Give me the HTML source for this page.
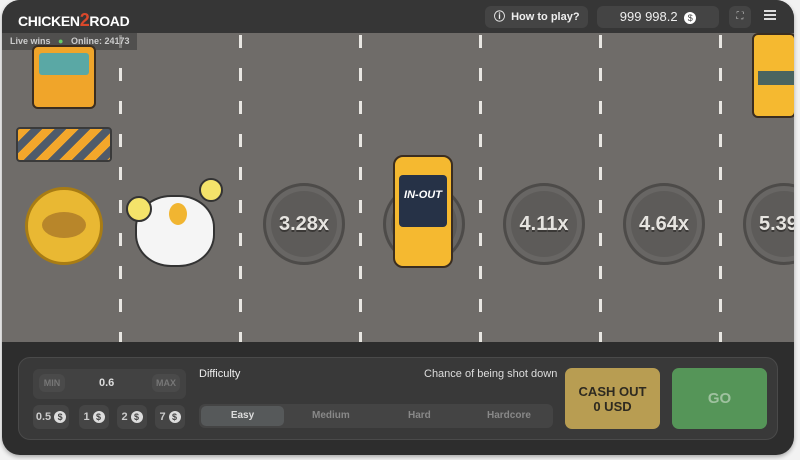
<!DOCTYPE html>
<html><head><style>
*{margin:0;padding:0;box-sizing:border-box}
body{width:800px;height:460px;background:#f2f2f2;font-family:"Liberation Sans",sans-serif;position:relative;overflow:hidden}
#app{position:absolute;left:2px;top:0;width:792px;height:455px;border-radius:18px;overflow:hidden;background:#2d2d2d;box-shadow:0 2px 4px rgba(0,0,0,.3)}
#hdr{position:absolute;left:0;top:0;width:792px;height:33px;background:#363636}
#road{position:absolute;left:0;top:33px;width:792px;height:309px;background:#6f6c69;overflow:hidden}
.dash{position:absolute;top:0;width:3px;height:309px;background:repeating-linear-gradient(to bottom,transparent 0 2px,#e8e6e2 2px 15px,transparent 15px 33px)}
.mh{position:absolute;width:82px;height:82px;border-radius:50%;background:#5d5b59;border:3px solid #4d4b49;box-shadow:inset 0 0 0 5px #686664}
.mh span{position:absolute;left:0;right:0;top:27px;text-align:center;color:#e6e4e0;font-weight:bold;font-size:20px;text-shadow:0 2px 0 #3a3836}
.btn{position:absolute;background:#444;border-radius:6px;color:#eee;font-size:12px;white-space:nowrap}
#panel{position:absolute;left:16px;top:357px;width:760px;height:83px;border:1px solid #4a4a4a;border-radius:12px;background:#393939}
.sm{position:absolute;background:#454545;border-radius:6px;color:#ccc;font-size:11px;font-weight:bold;text-align:center}
.coin{display:inline-block;width:12px;height:12px;border-radius:50%;background:#ddd;color:#444;font-size:9px;line-height:12px;text-align:center;vertical-align:middle;margin-left:3px}
</style></head><body>
<div id="app">
<div id="hdr">
<div style="position:absolute;left:16px;top:10px;font-weight:bold;font-size:14px;color:#fff;letter-spacing:-.3px">CHICKEN<span style="color:#d9482b;font-size:18px">2</span>ROAD</div>
<div class="btn" style="left:483px;top:6px;width:103px;height:22px;line-height:22px;font-weight:bold;padding-left:9px;font-size:11px">ⓘ&nbsp; How to play?</div>
<div class="btn" style="left:595px;top:6px;width:122px;height:22px;line-height:22px;text-align:center;font-size:13px">999 998.2 <span class="coin" style="background:#fff">$</span></div>
<div class="btn" style="left:727px;top:6px;width:22px;height:22px;text-align:center;line-height:22px;font-size:10px;color:#bbb">⛶</div>
<div style="position:absolute;left:762px;top:10px;width:12px;height:10px;border-top:2px solid #ddd;border-bottom:2px solid #ddd"><div style="margin-top:2px;height:2px;background:#ddd"></div></div>
</div>
<div id="road">
<div class="dash" style="left:117px"></div><div class="dash" style="left:237px"></div><div class="dash" style="left:357px"></div><div class="dash" style="left:477px"></div><div class="dash" style="left:597px"></div><div class="dash" style="left:717px"></div>
<div style="position:absolute;left:0;top:0;width:135px;height:17px;background:rgba(60,60,60,.6);font-size:9px;font-weight:bold;color:#ccc;line-height:17px;padding-left:8px">Live wins &nbsp;&nbsp;<span style="color:#6c6">●</span>&nbsp;&nbsp; Online: 24173</div>
<div style="position:absolute;left:30px;top:12px;width:64px;height:64px;background:#f0a52a;border-radius:6px;border:2px solid #3a2d20"><div style="margin:6px 5px;height:22px;background:#5aa8a5;border-radius:3px"></div></div>
<div style="position:absolute;left:14px;top:94px;width:96px;height:35px;border:2px solid #3a3a3a;border-radius:4px;background:repeating-linear-gradient(135deg,#f3a72b 0 9px,#4f5b6a 9px 17px)"></div>
<div style="position:absolute;left:23px;top:154px;width:78px;height:78px;border-radius:50%;background:#e9b833;border:3px solid #a87c14"><div style="margin:22px 14px;height:26px;border-radius:50%;background:#b8862a"></div></div>
<div style="position:absolute;left:133px;top:162px;width:80px;height:72px;border-radius:45%;background:#f5f5f5;border:2px solid #333"></div>
<div style="position:absolute;left:124px;top:163px;width:26px;height:26px;border-radius:50%;background:#f4e36a;border:2px solid #333"></div>
<div style="position:absolute;left:197px;top:145px;width:24px;height:24px;border-radius:50%;background:#f4e36a;border:2px solid #333"></div>
<div style="position:absolute;left:167px;top:170px;width:18px;height:22px;background:#f1b531;border-radius:50%"></div>
<div class="mh" style="left:261px;top:150px"><span>3.28x</span></div>
<div class="mh" style="left:381px;top:150px"></div>
<div class="mh" style="left:501px;top:150px"><span>4.11x</span></div>
<div class="mh" style="left:621px;top:150px"><span>4.64x</span></div>
<div class="mh" style="left:741px;top:150px"><span>5.39x</span></div>
<div style="position:absolute;left:391px;top:122px;width:60px;height:113px;background:#f5b930;border:2px solid #3a2d20;border-radius:10px"><div style="margin:18px 4px 0;height:52px;background:#263247;border-radius:4px;color:#fff;font-weight:bold;font-style:italic;font-size:11px;text-align:center;line-height:40px">IN-OUT</div></div>
<div style="position:absolute;left:750px;top:0;width:44px;height:85px;background:#f5b930;border:2px solid #3a2d20;border-radius:6px"><div style="margin:36px 0 0 4px;height:14px;background:#4a6460"></div></div>
</div>
<div id="panel">
<div style="position:absolute;left:14px;top:11px;width:153px;height:30px;background:#424242;border-radius:6px"></div>
<div class="sm" style="left:20px;top:16px;width:26px;height:18px;line-height:18px;font-size:9px;color:#777;background:#4a4a4a">MIN</div>
<div style="position:absolute;left:80px;top:19px;color:#ddd;font-size:11px;font-weight:bold">0.6</div>
<div class="sm" style="left:133px;top:16px;width:28px;height:18px;line-height:18px;font-size:9px;color:#777;background:#4a4a4a">MAX</div>
<div class="sm" style="left:14px;top:47px;width:36px;height:24px;line-height:24px">0.5<span class="coin">$</span></div>
<div class="sm" style="left:60px;top:47px;width:30px;height:24px;line-height:24px">1<span class="coin">$</span></div>
<div class="sm" style="left:98px;top:47px;width:30px;height:24px;line-height:24px">2<span class="coin">$</span></div>
<div class="sm" style="left:136px;top:47px;width:30px;height:24px;line-height:24px">7<span class="coin">$</span></div>
<div style="position:absolute;left:180px;top:10px;color:#eee;font-size:11px">Difficulty</div>
<div style="position:absolute;left:405px;top:10px;color:#ddd;font-size:11px">Chance of being shot down</div>
<div style="position:absolute;left:180px;top:46px;width:354px;height:24px;background:#444;border-radius:6px;font-size:10px;font-weight:bold;color:#888">
<div style="position:absolute;left:2px;top:2px;width:83px;height:20px;background:#56595a;border-radius:5px;color:#ddd;text-align:center;line-height:20px">Easy</div>
<div style="position:absolute;left:113px;top:6px">Medium</div><div style="position:absolute;left:209px;top:6px">Hard</div><div style="position:absolute;left:288px;top:6px">Hardcore</div></div>
<div style="position:absolute;left:546px;top:10px;width:95px;height:61px;background:#b89d52;border-radius:7px;color:#2e2a20;font-weight:bold;font-size:13px;text-align:center;padding-top:16px;line-height:15px">CASH OUT<br>0 USD</div>
<div style="position:absolute;left:653px;top:10px;width:95px;height:61px;background:#559558;border-radius:7px;color:#9fc29f;font-weight:bold;font-size:15px;text-align:center;line-height:61px">GO</div>
</div>
</div>
</body></html>
